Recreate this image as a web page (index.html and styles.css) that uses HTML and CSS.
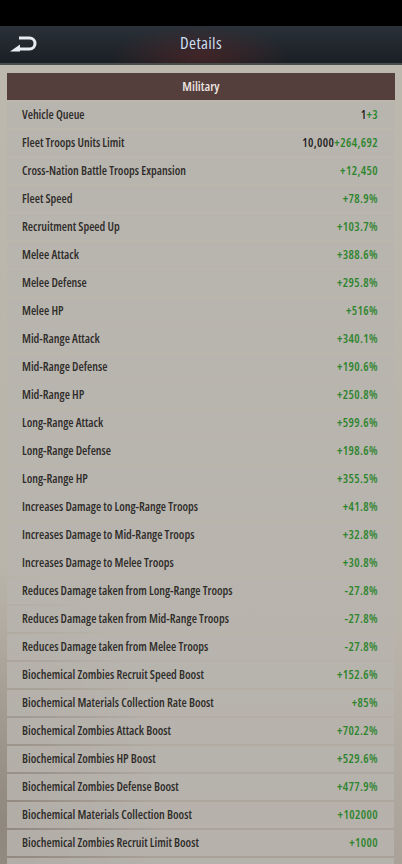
FILE: index.html
```html
<!DOCTYPE html>
<html>
<head>
<meta charset="utf-8">
<link rel="stylesheet" href="styles.css">
</head>
<body>
<div class="statusbar"></div>
<header class="topbar">
  <svg class="back" width="28" height="18" viewBox="0 0 28 18">
    <path d="M9 3 H19.5 A5.5 5.5 0 0 1 19.5 14 H9" fill="none" stroke="#e6ecf2" stroke-width="3"/>
    <polygon points="0,16.5 10,9.5 10,16.5" fill="#e6ecf2"/>
  </svg>
  <h1 class="title">Details</h1>
</header>
<main class="panel">
  <div class="section">Military</div>
  <div class="list">
    <div class="row"><span class="label">Vehicle Queue</span><span class="val"><span class="base">1</span>+3</span></div>
    <div class="row"><span class="label">Fleet Troops Units Limit</span><span class="val"><span class="base">10,000</span>+264,692</span></div>
    <div class="row"><span class="label">Cross-Nation Battle Troops Expansion</span><span class="val">+12,450</span></div>
    <div class="row"><span class="label">Fleet Speed</span><span class="val">+78.9%</span></div>
    <div class="row"><span class="label">Recruitment Speed Up</span><span class="val">+103.7%</span></div>
    <div class="row"><span class="label">Melee Attack</span><span class="val">+388.6%</span></div>
    <div class="row"><span class="label">Melee Defense</span><span class="val">+295.8%</span></div>
    <div class="row"><span class="label">Melee HP</span><span class="val">+516%</span></div>
    <div class="row"><span class="label">Mid-Range Attack</span><span class="val">+340.1%</span></div>
    <div class="row"><span class="label">Mid-Range Defense</span><span class="val">+190.6%</span></div>
    <div class="row"><span class="label">Mid-Range HP</span><span class="val">+250.8%</span></div>
    <div class="row"><span class="label">Long-Range Attack</span><span class="val">+599.6%</span></div>
    <div class="row"><span class="label">Long-Range Defense</span><span class="val">+198.6%</span></div>
    <div class="row"><span class="label">Long-Range HP</span><span class="val">+355.5%</span></div>
    <div class="row"><span class="label">Increases Damage to Long-Range Troops</span><span class="val">+41.8%</span></div>
    <div class="row"><span class="label">Increases Damage to Mid-Range Troops</span><span class="val">+32.8%</span></div>
    <div class="row"><span class="label">Increases Damage to Melee Troops</span><span class="val">+30.8%</span></div>
    <div class="row"><span class="label">Reduces Damage taken from Long-Range Troops</span><span class="val">-27.8%</span></div>
    <div class="row"><span class="label">Reduces Damage taken from Mid-Range Troops</span><span class="val">-27.8%</span></div>
    <div class="row"><span class="label">Reduces Damage taken from Melee Troops</span><span class="val">-27.8%</span></div>
    <div class="row"><span class="label">Biochemical Zombies Recruit Speed Boost</span><span class="val">+152.6%</span></div>
    <div class="row"><span class="label">Biochemical Materials Collection Rate Boost</span><span class="val">+85%</span></div>
    <div class="row"><span class="label">Biochemical Zombies Attack Boost</span><span class="val">+702.2%</span></div>
    <div class="row"><span class="label">Biochemical Zombies HP Boost</span><span class="val">+529.6%</span></div>
    <div class="row"><span class="label">Biochemical Zombies Defense Boost</span><span class="val">+477.9%</span></div>
    <div class="row"><span class="label">Biochemical Materials Collection Boost</span><span class="val">+102000</span></div>
    <div class="row"><span class="label">Biochemical Zombies Recruit Limit Boost</span><span class="val">+1000</span></div>
    <div class="row"><span class="label">&nbsp;</span><span class="val"></span></div>
  </div>
</main>
</body>
</html>
```

FILE: styles.css
```css
html, body {
  margin: 0;
  padding: 0;
  background: #000;
  width: 402px;
  height: 864px;
  overflow: hidden;
  font-family: "Open Sans", "DejaVu Sans Condensed", sans-serif;
  font-stretch: 75%;
}
.statusbar {
  height: 26px;
  background: #000;
}
.topbar {
  height: 37px;
  display: flex;
  align-items: center;
  position: relative;
  background:
    radial-gradient(ellipse 90px 30px at 200px 30px, rgba(110,40,40,0.45), rgba(110,40,40,0) 100%),
    linear-gradient(180deg, #2a3138 0%, #20262c 60%, #1a1f24 100%);
  border-bottom: 2px solid #4a4c4c;
}
.back {
  position: absolute;
  left: 10px;
  top: 9px;
}
.title {
  margin: 0 0 4px 0;
  width: 100%;
  text-align: center;
  font-size: 17px;
  letter-spacing: 0.3px;
  font-weight: 500;
  color: #c9dcef;
}
.panel {
  height: 800px;
  padding: 8px 7px 0 7px;
  background:
    radial-gradient(ellipse 160px 260px at 0px 760px, rgba(90,80,70,0.35), rgba(90,80,70,0) 100%),
    linear-gradient(180deg, #bdb8ae 0%, #b9b4aa 70%, #a9a198 100%);
}
.section {
  height: 27px;
  padding-bottom: 2px;
  box-sizing: border-box;
  background: #553f3c;
  color: #ece4e0;
  font-weight: 600;
  font-size: 13px;
  display: flex;
  align-items: center;
  justify-content: center;
}
.list {
  display: flex;
  flex-direction: column;
  gap: 2px;
  padding-top: 2px;
  margin-right: 1px;
}
.row {
  height: 26px;
  box-sizing: border-box;
  padding: 0 16px 2px 15px;
  background: rgba(183,180,174,0.85);
  display: flex;
  align-items: center;
  justify-content: space-between;
  font-size: 12px;
  font-weight: 600;
}
.label {
  color: #2e2c2a;
}
.val {
  color: #2c842c;
  letter-spacing: 0.4px;
}
.base {
  color: #24221f;
}
```
